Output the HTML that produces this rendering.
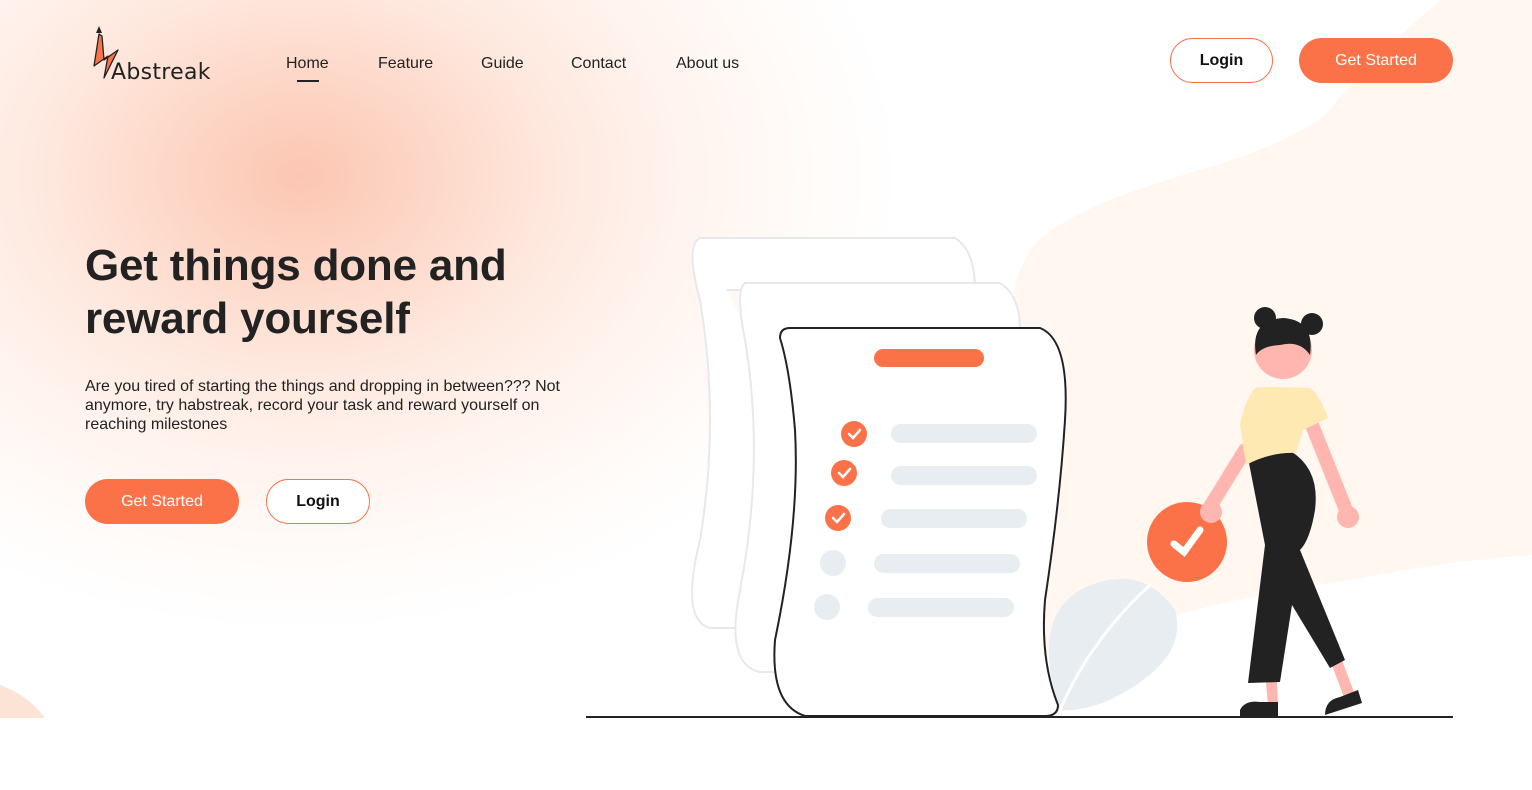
<!DOCTYPE html>
<html><head><style>
*{margin:0;padding:0;box-sizing:border-box}
body{width:1532px;height:790px;overflow:hidden;background:#fff;font-family:"Liberation Sans",Roboto,sans-serif;color:#222;position:relative}
.glow{position:absolute;left:-300px;top:-280px;width:1200px;height:950px;border-radius:50%;background:radial-gradient(ellipse closest-side at 50% 48%,#fcc6b2 0%,#fdd6c6 20%,#fee8de 42%,#fff3ed 62%,#fffaf7 80%,rgba(255,255,255,0) 100%)}
nav a{position:absolute;top:55px;font-size:16px;color:#222;text-decoration:none}
.btn{position:absolute;border-radius:23px;font-size:16px;font-weight:bold;display:flex;align-items:center;justify-content:center}
.o{background:#fb7249;color:#fff}
.w{border:1px solid #fb7249;color:#111;background:#fff}
h1{position:absolute;left:85px;top:239px;font-size:44px;line-height:53px;font-weight:bold;color:#222;letter-spacing:-0.2px}
p{position:absolute;left:85px;top:377px;width:490px;font-size:16px;line-height:19px;color:#222}
</style></head><body>
<div class="glow"></div>
<svg style="position:absolute;left:0;top:0" width="1532" height="790">
<path d="M1440 0 Q1360 70 1330 110 Q1300 140 1200 170 Q1060 210 1030 250 Q1000 300 1020 360 L1020 718 L1532 718 L1532 0Z" fill="#fff7f0"/>
<path d="M1030 660 Q1200 600 1350 580 Q1450 560 1532 555 L1532 718 L1030 718Z" fill="#fff"/>
<path d="M0 685 Q28 695 45 718 L0 718Z" fill="#fde3d6"/>
<rect x="0" y="718" width="1532" height="72" fill="#fff"/>
<path d="M700 238 L955 238 Q975 250 975 290 L710 290 Q690 250 700 238Z" fill="#fff" stroke="#e6e8eb" stroke-width="2"/>
<path d="M700 238 Q685 245 700 300 Q720 420 700 540 Q680 620 710 628 L900 628" fill="#fff" stroke="#e6e8eb" stroke-width="2"/>
<path d="M745 283 L1000 283 Q1020 295 1020 330 L1020 670 L760 672 Q725 665 740 590 Q765 460 745 340 Q735 290 745 283Z" fill="#fff" stroke="#e6e8eb" stroke-width="2"/>
<path d="M1060 710 Q1030 620 1080 590 Q1140 560 1175 610 Q1190 660 1110 700 Q1080 712 1060 710Z" fill="#e8edf2"/>
<path d="M1060 710 Q1090 640 1150 585" stroke="#fff" stroke-width="3" fill="none"/>
<path d="M790 328 L1040 328 Q1070 340 1065 420 Q1060 500 1045 600 Q1040 660 1058 705 Q1058 716 1045 716 L805 716 Q770 705 775 640 Q800 520 795 430 Q790 370 780 338 Q780 328 790 328Z" fill="#fff" stroke="#222" stroke-width="2"/>
<rect x="874" y="349" width="110" height="18" rx="9" fill="#fb7249"/>
<g fill="#e8edf2"><rect x="891" y="424" width="146" height="19" rx="9.5"/><rect x="891" y="466" width="146" height="19" rx="9.5"/><rect x="881" y="509" width="146" height="19" rx="9.5"/><rect x="874" y="554" width="146" height="19" rx="9.5"/><rect x="868" y="598" width="146" height="19" rx="9.5"/>
<circle cx="833" cy="563" r="13"/><circle cx="827" cy="607" r="13"/></g>
<g fill="#fb7249"><circle cx="854" cy="434" r="13"/><circle cx="844" cy="473" r="13"/><circle cx="838" cy="518" r="13"/></g>
<g stroke="#fff" stroke-width="2.5" fill="none" stroke-linecap="round"><path d="M849 434l4 4 7-8"/><path d="M839 473l4 4 7-8"/><path d="M833 518l4 4 7-8"/></g>
<line x1="586" y1="717" x2="1453" y2="717" stroke="#222" stroke-width="2"/>
<path d="M1245 450 L1205 515" stroke="#ffb6b0" stroke-width="14" stroke-linecap="round"/>
<path d="M1310 420 L1348 515" stroke="#ffb6b0" stroke-width="14" stroke-linecap="round"/>
<circle cx="1348" cy="517" r="11" fill="#ffb6b0"/>
<circle cx="1187" cy="542" r="40" fill="#fb7249"/>
<path d="M1174 544l10 8 16-22" stroke="#fff" stroke-width="7" fill="none" stroke-linecap="round"/>
<circle cx="1211" cy="512" r="11" fill="#ffb6b0"/>
<path d="M1262 640 L1268 705 L1278 705 L1275 640Z M1330 660 L1345 700 L1355 695 L1340 655Z" fill="#ffb6b0"/>
<path d="M1248 458 Q1270 450 1292 452 Q1320 470 1315 510 Q1310 540 1300 550 L1345 660 L1330 668 L1292 605 L1280 682 L1248 683 L1265 545Z" fill="#222"/>
<path d="M1240 710 Q1245 700 1260 702 L1278 702 L1278 717 L1240 717Z M1325 715 Q1325 700 1340 697 L1358 690 L1362 703 Z" fill="#222"/>
<path d="M1255 388 Q1260 386 1310 388 Q1320 395 1328 418 L1303 430 L1296 453 Q1270 452 1246 465 L1240 425 Q1245 400 1255 388Z" fill="#ffe9b3"/>
<circle cx="1283" cy="350" r="29" fill="#ffb6b0"/>
<path d="M1256 355 Q1250 320 1283 318 Q1315 320 1310 355 Q1300 340 1280 345 Q1262 346 1256 355Z" fill="#222"/>
<circle cx="1265" cy="318" r="11" fill="#222"/><circle cx="1312" cy="324" r="11" fill="#222"/>
<path d="M99 34 L94 66 L108 56 L104 78 L118 50 L104 60 L102 36Z" fill="#fb7249" stroke="#222" stroke-width="1.3" stroke-linejoin="round"/>
<path d="M96 33 L99 26 L102 33Z" fill="#222"/>
<text x="111" y="79" font-family="DejaVu Sans,sans-serif" font-size="22" fill="#222" letter-spacing="0.3">Abstreak</text>
</svg>
<nav><a style="left:286px">Home</a><a style="left:378px">Feature</a><a style="left:481px">Guide</a><a style="left:571px">Contact</a><a style="left:676px">About us</a></nav>
<div style="position:absolute;left:297px;top:80px;width:22px;height:2px;background:#222"></div>
<div class="btn w" style="left:1170px;top:38px;width:103px;height:45px">Login</div>
<div class="btn o" style="left:1299px;top:38px;width:154px;height:45px;font-weight:normal">Get Started</div>
<h1>Get things done and<br>reward yourself</h1>
<p>Are you tired of starting the things and dropping in between??? Not anymore, try habstreak, record your task and reward yourself on reaching milestones</p>
<div class="btn o" style="left:85px;top:479px;width:154px;height:45px;font-weight:normal">Get Started</div>
<div class="btn w" style="left:266px;top:479px;width:104px;height:45px">Login</div>
</body></html>
